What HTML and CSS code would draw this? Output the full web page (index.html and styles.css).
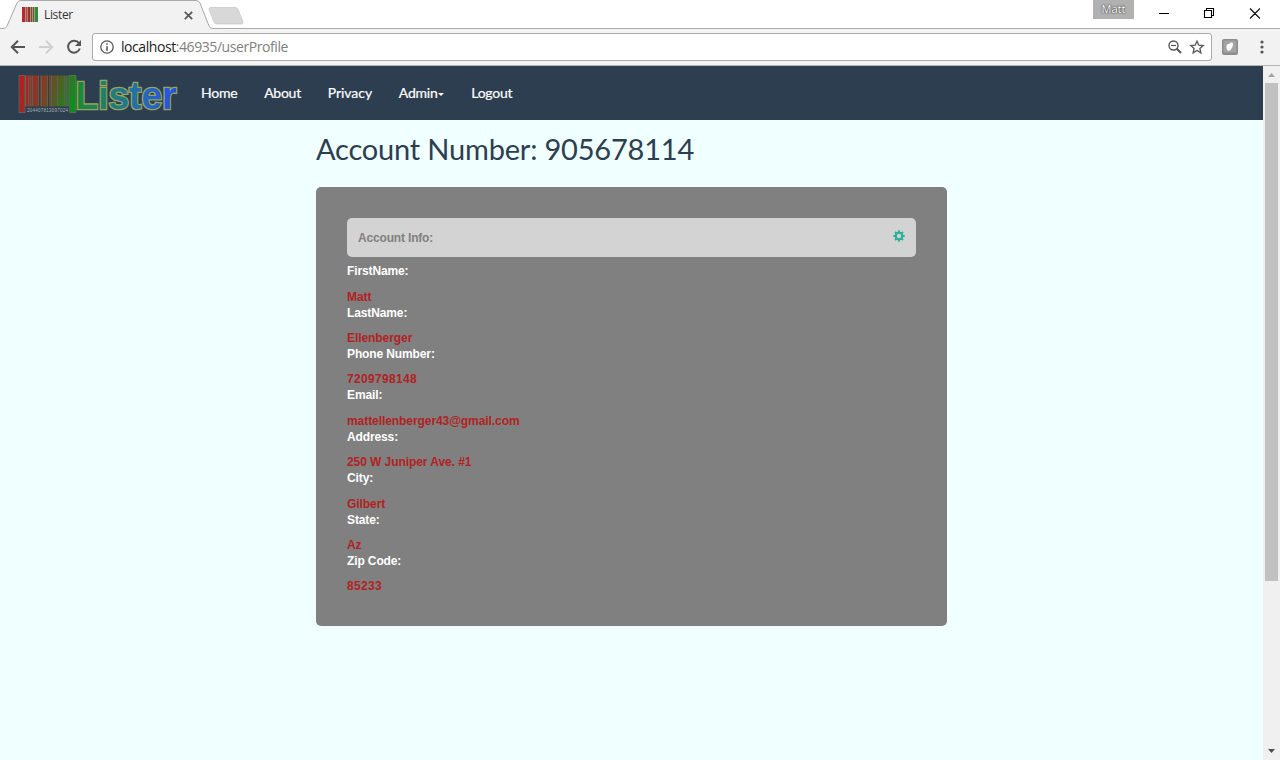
FILE: index.html
```html
<!DOCTYPE html>
<html lang="en">
<head>
<meta charset="utf-8">
<title>Lister</title>
<link rel="stylesheet" href="styles.css">
</head>
<body>
<div class="browser">
  <header class="tabstrip">
    <svg class="tab-shape" width="250" height="29" viewBox="0 0 250 29">
      <path d="M0 28.5H3Q6 28.5 7 26L17 3Q18 .5 21 .5H196Q199 .5 200 3L209 26Q210 28.5 213 28.5H250V29H0Z" fill="#f2f2f2"/>
      <path d="M0 28.5H3Q6 28.5 7 26L17 3Q18 .5 21 .5H196Q199 .5 200 3L209 26Q210 28.5 213 28.5H250" fill="none" stroke="#a9a9a9"/>
      <path d="M211 7.5H235Q237 7.5 238 9L243 22Q243.500 24 241 24H217Q215 24 214 22L209 9.500Q208.500 7.500 211 7.500Z" fill="#d8d8d8" stroke="#c4c4c4" stroke-width=".7"/>
    </svg>
    <div class="tab">
      <svg class="favicon" width="16" height="16" viewBox="0 0 16 16">
        <path fill="#e3c9c0" d="M0 0h16v15H0z"/>
        <path fill="#b9292c" d="M0 0h3v15H0z"/><path fill="#a84a48" d="M3.500 0h1.500v15H3.500z"/><path fill="#8e382c" d="M5.500 0h2.500v15H5.500z"/><path fill="#765030" d="M8.500 0h1.500v15H8.500z"/><path fill="#6a6035" d="M10.500 0h2v15h-2z"/><path fill="#328a3c" d="M13 0h3v15h-3z"/>
      </svg>
      <span class="tab-title">Lister</span>
      <svg class="tab-close" width="9" height="9" viewBox="0 0 9 9"><path d="M.8.8l7.400 7.400M8.200.8L.8 8.200" stroke="#555" stroke-width="1.700"/></svg>
    </div>
    <div class="window-controls">
      <span class="profile">Matt</span>
      <svg width="120" height="26" viewBox="0 0 120 26" fill="none" stroke="#000">
        <path d="M19 13.500h10M66.500 10.500V8.500h7v7h-2M64.500 10.500h7v7h-7zM110 8.500l10 10M120 8.500l-10 10" stroke-width="1.100"/>
      </svg>
    </div>
  </header>
  <div class="toolbar">
    <svg class="nav-icons" width="82" height="20" viewBox="0 0 82 20" fill="none" stroke-width="2">
      <path d="M25 10H12M18 3.800L11.800 10 18 16.200" stroke="#555"/>
      <path d="M39 10h13M46 3.800L52.200 10 46 16.200" stroke="#d0d0d0"/>
      <path d="M79 6.200A6 6 0 1 0 79.800 11.500" stroke="#555"/><path d="M81 3v6h-6z" fill="#555"/>
    </svg>
    <div class="address">
      <svg width="14" height="14" viewBox="0 0 14 14"><circle cx="7" cy="7" r="6.200" fill="none" stroke="#555" stroke-width="1.300"/><path d="M6.200 6.200h1.600v4.500H6.200zM6.200 3.300h1.600v1.500H6.200z" fill="#555"/></svg>
      <span class="url"><span class="host">localhost</span>:46935/userProfile</span>
      <svg class="address-actions" width="38" height="16" viewBox="0 0 38 16" fill="none" stroke="#555">
        <circle cx="6.500" cy="6.500" r="4.500" stroke-width="1.400"/><path d="M4 6.500h5" stroke-width="1.200"/><path d="M9.800 9.800l4.200 4.200" stroke-width="2"/>
        <path d="M30 2.200l1.800 4 4.400.4-3.300 2.900 1 4.300L30 11.500l-3.900 2.300 1-4.300-3.300-2.900 4.400-.4z" stroke-width="1.300"/>
      </svg>
    </div>
    <svg class="extension" width="16" height="16" viewBox="0 0 16 16"><rect width="16" height="16" rx="2" fill="#8c8c8c"/><rect x="1.500" y="1.500" width="13" height="12" rx="1" fill="#a3a3a3"/><path d="M4.500 9C4 6 5.500 4.500 7 5.200 8 3.500 10.500 3 11 4.500 11 8 9 12 6.500 12Q4.800 12 4.500 9" fill="#fff"/></svg>
    <svg class="menu-dots" width="4" height="14" viewBox="0 0 4 14" fill="#555"><circle cx="2" cy="2" r="1.600"/><circle cx="2" cy="7" r="1.600"/><circle cx="2" cy="12" r="1.600"/></svg>
  </div>
  <div class="viewport">
    <div class="page">
      <nav class="navbar">
        <svg class="logo" width="164" height="48" viewBox="0 0 164 48">
          <defs>
            <linearGradient id="bars" gradientUnits="userSpaceOnUse" x1="1" y1="0" x2="58" y2="14"><stop stop-color="#c3171c"/><stop offset=".5" stop-color="#7d4022"/><stop offset="1" stop-color="#128a22"/></linearGradient>
            <linearGradient id="word" gradientUnits="userSpaceOnUse" x1="58" y1="0" x2="158" y2="0"><stop stop-color="#1c8a30"/><stop offset=".5" stop-color="#1f7896"/><stop offset=".8" stop-color="#2760cc"/><stop offset="1" stop-color="#2450ea"/></linearGradient>
          </defs>
          <path fill="url(#bars)" d="M1.500 3.500h5v37h-5zM8 3.500h2v31H8zM11 3.500h1v31h-1zM13 3.500h1v31h-1zM15 3.500h5v31h-5zM22 3.500h1v31h-1zM24 3.500h5v31h-5zM31 3.500h2v31h-2zM34 3.500h5v31h-5zM40 3.500h6v31h-6zM47 3.500h1v31h-1zM49 3.500h2v31h-2zM52 3.500h6v37h-6z"/>
          <path fill="none" stroke="#8a8062" stroke-width=".5" d="M1 40.500v-37h6v37zM7.500 3.500v31M10.500 3.500v31M12.500 3.500v31M14.500 3.500v31M20.500 3.500v31M23.500 3.500v31M29.500 3.500v31M33.500 3.500v31M39.500 3.500v31M46.500 3.500v31M48.500 3.500v31M51.500 3.500v37h6.500v-37z"/>
          <text class="logo-code" x="9" y="40" textLength="41">204407813097024</text>
          <text class="logo-word outline" x="57.500" y="37" textLength="101" lengthAdjust="spacingAndGlyphs">Lister</text>
        </svg>
        <ul class="menu">
          <li>Home</li><li>About</li><li class="wide">Privacy</li><li class="dropdown">Admin<i class="caret"></i></li><li>Logout</li>
        </ul>
      </nav>
      <main class="content">
        <h1>Account Number: 905678114</h1>
        <section class="panel">
          <div class="panel-title">
            <span>Account Info:</span>
            <svg width="12" height="12" viewBox="0 0 12 12"><path d="M6 .3v11.400M.3 6h11.400M2 2l8 8M10 2l-8 8" stroke="#28b196" stroke-width="1.900"/><circle cx="6" cy="6" r="4.300" fill="#28b196"/><circle cx="6" cy="6" r="2.200" fill="#d3d3d3"/></svg>
          </div>
          <dl class="fields">
            <dt>FirstName:</dt><dd>Matt</dd>
            <dt>LastName:</dt><dd>Ellenberger</dd>
            <dt>Phone Number:</dt><dd class="digits">7209798148</dd>
            <dt>Email:</dt><dd>mattellenberger43@gmail.com</dd>
            <dt>Address:</dt><dd>250 W Juniper Ave. #1</dd>
            <dt>City:</dt><dd>Gilbert</dd>
            <dt>State:</dt><dd>Az</dd>
            <dt>Zip Code:</dt><dd class="digits">85233</dd>
          </dl>
        </section>
      </main>
    </div>
    <div class="scrollbar">
      <svg width="17" height="17" viewBox="0 0 17 17"><path d="M5 11l3.500-4L12 11z" fill="#a3a3a3"/></svg>
      <div class="thumb"></div>
      <svg class="scroll-down" width="17" height="17" viewBox="0 0 17 17"><path d="M5 6h7l-3.500 4z" fill="#505050"/></svg>
    </div>
  </div>
</div>
</body>
</html>
```
FILE: styles.css
```css
* { box-sizing: border-box; }
body { margin: 0; overflow: hidden; }
svg { display: block; flex: none; }
.browser {
  width: 1280px;
  height: 760px;
  display: flex;
  flex-direction: column;
  font-family: "Open Sans", "Noto Sans", sans-serif;
}
.tabstrip {
  position: relative;
  height: 29px;
  flex: none;
  display: flex;
  justify-content: space-between;
  background: #fff;
  border-bottom: 1px solid #a9a9a9;
}
.tab-shape { position: absolute; left: 0; top: 0; }
.tab {
  position: relative;
  width: 193px;
  height: 29px;
  padding: 1px 0 0 22px;
  display: flex;
  align-items: center;
}
.tab-title {
  margin-left: 6px;
  flex: 1;
  font-size: 12px;
  line-height: 16px;
  padding-bottom: 1px;
  letter-spacing: -0.35px;
  color: #333;
}
.window-controls { display: flex; width: 187px; gap: 6px; }
.profile {
  width: 41px;
  height: 19px;
  background: #b1b1b1;
  color: #fff;
  font-size: 11px;
  line-height: 18px;
  text-align: center;
  text-shadow: 0 0 2px #333, 0 0 1px #333;
}
.toolbar {
  height: 37px;
  flex: none;
  display: flex;
  align-items: center;
  background: #f2f2f2;
  border-bottom: 1px solid #b4b4b7;
}
.address {
  width: 1120px;
  height: 28px;
  margin-left: 10px;
  padding: 0 6px 0 7px;
  display: flex;
  align-items: center;
  background: #fff;
  border: 1px solid #aaa;
  border-radius: 3px;
}
.url {
  margin-left: 7px;
  flex: 1;
  font-size: 14px;
  line-height: 26px;
  letter-spacing: -0.43px;
  color: #808080;
}
.host { color: #222; }
.extension { margin-left: 10px; }
.menu-dots { margin-left: 22px; }
.viewport { flex: 1; display: flex; min-height: 0; }
.page { width: 1263px; background: #f0ffff; }
.navbar {
  height: 54px;
  display: flex;
  background: #2c3e50;
}
.logo { margin: 6px 0 0 18px; }
.logo-code { font: 4.5px "Liberation Sans", sans-serif; fill: #abb2b4; }
.logo-word {
  font: bold 39px "Liberation Sans", Arial, sans-serif;
  fill: url(#word);
  stroke: #9aa45c;
  stroke-width: 2.6px;
  paint-order: stroke;
}
.menu {
  display: flex;
  gap: 26.8px;
  margin: 0;
  padding: 0 0 0 19px;
  list-style: none;
  font: 14px/54px Lato, sans-serif;
  letter-spacing: -0.25px;
  color: #fff;
  -webkit-text-stroke: 0.2px #fff;
}
.wide { letter-spacing: -0.05px; }
.dropdown { display: flex; align-items: center; }
.caret {
  margin: 3px 0 0 1px;
  border: 3px solid transparent;
  border-top-color: #fff;
  border-bottom: 0;
}
.content { width: 631px; margin-left: 316px; }
h1 {
  margin: 0;
  padding-top: 10px;
  height: 67px;
  font: 29px/37px Lato, sans-serif;
  letter-spacing: -0.19px;
  color: #2c3e50;
  white-space: nowrap;
}
.panel {
  height: 439px;
  padding: 31px;
  background: #808080;
  border-radius: 5px;
  font: bold 12px/15px "Liberation Sans", Arial, sans-serif;
}
.panel-title {
  height: 39px;
  padding: 0 11px;
  display: flex;
  align-items: center;
  justify-content: space-between;
  background: #d3d3d3;
  border-radius: 5px;
  color: #808080;
  letter-spacing: -0.17px;
}
.panel-title span { padding-top: 1px; }
.panel-title svg { margin-bottom: 3px; }
.fields { margin: 7.1px 0 0; }
dt { height: 25.45px; color: #fff; letter-spacing: -0.12px; }
dd { margin: 0; height: 15.98px; color: #b22222; letter-spacing: -0.07px; }
.digits { letter-spacing: 0.33px; }
.scrollbar {
  width: 17px;
  display: flex;
  flex-direction: column;
  background: #f0f0f0;
}
.thumb { width: 13px; height: 498px; margin-left: 2px; background: #c1c1c1; }
.scroll-down { margin-top: auto; }
```
